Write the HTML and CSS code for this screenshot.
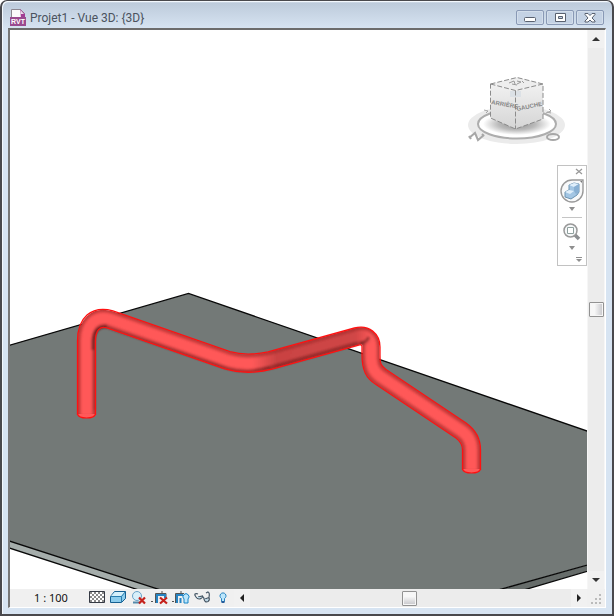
FILE: index.html
```html
<!DOCTYPE html>
<html lang="fr">
<head>
<meta charset="utf-8">
<meta name="viewport" content="width=device-width, initial-scale=1">
<title>Projet1 - Vue 3D: {3D}</title>
<link rel="stylesheet" href="styles.css">
</head>
<body>
<main class="window">
  <header class="titlebar">
    <svg class="doc-icon" viewBox="0 0 16 17" aria-hidden="true">
      <path d="M1.500 .5h9l4 4v11.500h-13z" fill="#fbfafc" stroke="#8d8891"/>
      <path d="M10 0l5 5v4h-4z" fill="#a23d94"/>
      <path d="M10.500 1v4H14z" fill="#eadcea"/>
      <path d="M0 8h16v9H0z" fill="#9a4a90"/>
      <text class="doc-type" x="8" y="15" text-anchor="middle">RVT</text>
    </svg>
    <h1 class="title">Projet1 - Vue 3D: {3D}</h1>
    <div class="window-buttons">
      <button class="window-button" aria-label="Réduire"><svg viewBox="0 0 26 14" aria-hidden="true"><rect x="7.500" y="6.500" width="11" height="4" rx="1" fill="#fff" stroke="#59616f"/></svg></button>
      <button class="window-button" aria-label="Agrandir"><svg viewBox="0 0 26 14" aria-hidden="true"><path d="M8.500 2.500h10v8h-10zM11.500 5.500v2h4v-2z" fill="#fff" fill-rule="evenodd" stroke="#59616f"/></svg></button>
      <button class="window-button" aria-label="Fermer"><svg viewBox="0 0 26 14" aria-hidden="true"><path d="M8 2.500h3l2 2 2-2h3v1L15 7l3 3v1h-3l-2-2-2 2H8v-1l3-3-3-3.500z" fill="#fff" stroke="#59616f"/></svg></button>
    </div>
  </header>

  <section class="client">
    <div class="viewport">
      <svg class="scene" viewBox="10 30 577 559" preserveAspectRatio="xMidYMid slice" role="img" aria-label="Canalisation rouge sur une dalle">
        <defs>
          <linearGradient id="fade" gradientUnits="userSpaceOnUse" x1="252" y1="0" x2="373" y2="0">
            <stop offset="0" stop-color="#571515" stop-opacity="0"/>
            <stop offset=".2" stop-color="#571515" stop-opacity=".32"/>
            <stop offset=".85" stop-color="#571515" stop-opacity=".28"/>
            <stop offset="1" stop-color="#571515" stop-opacity="0"/>
          </linearGradient>
          <filter id="soft" filterUnits="userSpaceOnUse" x="10" y="280" width="577" height="220"><feGaussianBlur stdDeviation="1"/></filter>
          <path id="run" d="M86.500 415V341C86.500 324 96 315 110 319.300L227 360.200Q247 366.500 270 360.500L357 336.500C366 334 371 339 371 347V355C371 367 374 372 381 377L461 430.500C468 435 471.500 441 471.500 450V470"/>
        </defs>
        <path d="M0 348L188.500 293.500 600 435.500V561.500L490 592H167L0 538z" fill="#737977"/>
        <path d="M0 538L170 593H148L0 545z" fill="#a5adab"/>
        <path d="M491 592L600 561.500V567.500L517 592z" fill="#666c6a"/>
        <path d="M0 348L188.500 293.500 600 435.500M0 538L170 593M0 545L148 593M491 592L600 561.500M517 592L600 567.500" fill="none" stroke="#080808" stroke-width="1.300"/>
        <g fill="none">
          <use href="#run" stroke="#c03a3a" stroke-width="17"/>
          <g filter="url(#soft)">
            <use href="#run" stroke="#e84b4b" stroke-width="13"/>
            <use href="#run" stroke="#ff5959" stroke-width="10"/>
            <path d="M94 410V340Q95 327 106 327L228 368.500Q247 374 270 367" stroke="#7a2525" stroke-width="2" opacity=".6"/>
            <path d="M93 350V340Q94 326 107 326" stroke="#4b1515" stroke-width="3" opacity=".6"/>
            <path d="M250 363.500L270 360.500 357 336.500Q366 333 371 343" stroke="url(#fade)" stroke-width="16"/>
            <path d="M250 371Q261 370 270 367.500L358 343" stroke="url(#fade)" stroke-width="4"/>
            <path d="M360 343Q366 343 369 337" stroke="#4b1515" stroke-width="3" opacity=".5"/>
          </g>
          <path d="M77.500 415V341C77.500 318 91 305 113 310.800L230 351.700Q247 356.500 268 351.800L354.500 328C369 324 380 334 380 347V355C380 364 381 366 386 369.500L466 423C476 430 480.500 439 480.500 450V470M95.500 415V341C95.500 330 100 326 107 327.800L224 368.700Q247 375.500 272 369.200L359.500 345Q362 344 362 347V355C362 370 366 378 376 384.500L456 438C460 441 462.500 445 462.500 450V470" stroke="#ff1111" stroke-width="1.300"/>
        </g>
        <path d="M77.500 414q1 4 9 4t9-4M462.500 469q1 4 9 4t9-4" fill="#ff5959" stroke="#ff1111" stroke-width="1.200"/>
      </svg>

      <svg class="view-cube" viewBox="466 72 102 76" role="img" aria-label="Cube de vue">
        <defs>
          <radialGradient id="shadow"><stop offset="0" stop-color="#8d8d8d"/><stop offset=".55" stop-color="#bbb"/><stop offset="1" stop-color="#fff"/></radialGradient>
          <linearGradient id="side" x1="0" y1="0" x2="0" y2="1"><stop offset="0" stop-color="#f1f1f1"/><stop offset="1" stop-color="#d5d5d5"/></linearGradient>
        </defs>
        <ellipse cx="516.500" cy="125" rx="48.500" ry="19" fill="#ebebeb"/>
        <ellipse cx="517" cy="124" rx="39" ry="14.500" fill="#fff" stroke="#adadad" stroke-width="2"/>
        <ellipse cx="517" cy="124" rx="34" ry="11" fill="url(#shadow)"/>
        <path d="M490.500 84L515.500 90.500V129L490.500 118z" fill="url(#side)"/>
        <path d="M515.500 90.500L543 84V119L515.500 129z" fill="url(#side)"/>
        <path d="M490.500 84L517 77.500 543 84 515.500 90.500z" fill="#eee"/>
        <path d="M510 91h11v6h-11z" fill="#dce1e6"/>
        <path d="M490.500 84L517 77.500 543 84V119L515.500 129 490.500 118zL515.500 90.500 543 84M515.500 90.500V129" fill="none" stroke="#8c8c8c" stroke-dasharray="5 2"/>
        <path d="M509 83l5-2 1 3m2-3l4 1-4 2m5-3l2 2m-12 1l5 1" fill="none" stroke="#999"/>
        <text class="cube-label" transform="translate(491 104) rotate(10)">ARRIÈRE</text>
        <text class="cube-label" transform="translate(517 111) rotate(-12)">GAUCHE</text>
        <g fill="none" stroke="#a7a7a7" stroke-width="2">
          <path d="M469 138l6-5 3 7 6-5M469 136l2 3M482 134l2 2"/>
          <ellipse cx="553" cy="137" rx="6" ry="3"/>
          <path d="M484 110l4 1-2 2m60 0l5-2-2-2m-2 3l4 1" stroke-width="1"/>
        </g>
      </svg>

      <nav class="nav-bar" aria-label="Navigation">
        <button class="nav-close" aria-label="Fermer la barre"><svg viewBox="0 0 8 8" aria-hidden="true"><path d="M1 1l6 5M7 1L1 6" stroke="#999" stroke-width="1.300"/></svg></button>
        <button class="nav-tool" aria-label="Disque de navigation"><svg viewBox="0 0 26 26" aria-hidden="true">
          <path d="M13 2H24V13A11 11 0 1 1 13 2z" fill="#f8f9fa" stroke="#999" stroke-width="1.400"/>
          <path d="M10 7l5-2 5 1v8l-2 3-6 4-6-2v-5l4-2z" fill="#a3c6e4" stroke="#6d94b2"/>
          <path d="M10 7l5-2 5 1-5 3zM6 14l4-2 5 1-4 3z" fill="#e0effb"/>
          <path d="M15 9l5-3v8l-3 2-2-3z" fill="#89b0d3"/>
          <path d="M21 3h2v2z" fill="#777"/>
        </svg></button>
        <button class="nav-drop" aria-label="Options du disque"><svg viewBox="0 0 6 4" aria-hidden="true"><path d="M0 0h6L3 4z" fill="#8f8f8f"/></svg></button>
        <hr class="nav-line">
        <button class="nav-tool nav-zoom" aria-label="Zoom"><svg viewBox="0 0 20 20" aria-hidden="true">
          <path d="M13 13l4 4" stroke="#8b8e91" stroke-width="3.500"/><circle cx="8.500" cy="8.500" r="6.500" fill="#f5f7f8" stroke="#999" stroke-width="1.500"/><path d="M5.500 5.500h6v6h-6z" fill="#fff" stroke="#8fa09e"/>
        </svg></button>
        <button class="nav-drop" aria-label="Options du zoom"><svg viewBox="0 0 6 4" aria-hidden="true"><path d="M0 0h6L3 4z" fill="#8f8f8f"/></svg></button>
        <button class="nav-more" aria-label="Personnaliser"><svg viewBox="0 0 6 5" aria-hidden="true"><path d="M0 .5h6" stroke="#8f8f8f"/><path d="M0 2h6L3 5z" fill="#8f8f8f"/></svg></button>
      </nav>
    </div>

    <div class="scroll scroll-vertical">
      <button class="arrow" aria-label="Défiler vers le haut"><svg viewBox="0 0 8 8" aria-hidden="true"><path d="M0 6L4 2l4 4z" fill="#333"/></svg></button>
      <div class="track"><div class="thumb"></div></div>
      <button class="arrow" aria-label="Défiler vers le bas"><svg viewBox="0 0 8 8" aria-hidden="true"><path d="M0 2h8L4 6z" fill="#333"/></svg></button>
    </div>

    <footer class="status">
      <button class="scale">1 : 100</button>
      <div class="tools">
        <button class="tool" aria-label="Niveau de détail"><svg viewBox="0 0 18 16" aria-hidden="true">
          <defs><pattern id="check" width="4" height="4" patternUnits="userSpaceOnUse"><path d="M0 0h2v2H0zM2 2h2v2H2z" fill="#8a8a8a"/></pattern></defs>
          <path d="M1.500 1.500h15v11h-15z" fill="#fff"/><path d="M1.500 1.500h15v11h-15z" fill="url(#check)" stroke="#343943"/></svg></button>
        <button class="tool" aria-label="Style visuel"><svg viewBox="0 0 18 16" aria-hidden="true"><path d="M1.500 6.500l4-5h11v7l-4 4h-11z" fill="#8cccec" stroke="#155f91" stroke-linejoin="round"/><path d="M2 6l4-4h10l-4 4z" fill="#d5f0fb"/><path d="M2 6.500h10.500v5.500M12.500 6.500l4-5" fill="none" stroke="#287dae"/></svg></button>
        <button class="tool" aria-label="Ombres"><svg viewBox="0 0 18 16" aria-hidden="true"><circle cx="7" cy="6" r="4.500" fill="#d8effa" stroke="#6aa2c7"/><path d="M3 12.500h7" stroke="#558bac" stroke-width="2"/><path d="M9 7.500l6 6M15 7.500l-6 6" stroke="#c5221c" stroke-width="2.200"/></svg></button>
        <button class="tool" aria-label="Cadrer la vue"><svg viewBox="0 0 18 16" aria-hidden="true"><path d="M0 11.500h2M4 11.500h2M4.500 13V3.500H15V8M11 1v2" stroke="#555" fill="none"/><path d="M6 13V5h8v3" stroke="#2783c1" fill="none" stroke-width="2"/><path d="M9 7.500l7 6M16 7.500l-7 6" stroke="#c5221c" stroke-width="2.200"/></svg></button>
        <button class="tool" aria-label="Zone cadrée"><svg viewBox="0 0 18 16" aria-hidden="true"><path d="M0 11.500h2M4 11.500h2M3.500 13V3.500H12M9 1v2" stroke="#555" fill="none"/><path d="M5 13V5h6M8.500 8v5" stroke="#2783c1" fill="none" stroke-width="2"/><path d="M12 9a3 3 0 1 1 4 0v4h-4z" fill="#bce6fb" stroke="#1684c6"/></svg></button>
        <button class="tool" aria-label="Masquer temporairement"><svg viewBox="0 0 18 16" aria-hidden="true"><path d="M1.500 4.500L3 7q2 3 5 1.500 2-1 1.500-2.500L5 7M9.500 7q1-1 1.500 2 1 4 4 2.500 2-1.500 1-4L12 9M16 7q1-4-1-5l-2 1M1.500 4.500Q3 3 5 4" fill="none" stroke="#455766" stroke-width="1.200"/><path d="M4 7h4v1H4zM12 9h3v2h-2z" fill="#bad7e6"/></svg></button>
        <button class="tool" aria-label="Révéler les éléments"><svg viewBox="0 0 18 16" aria-hidden="true"><path d="M7.500 8.500a3 3 0 1 1 3 0v3h-3z" fill="#bce6fb" stroke="#2783c1"/><path d="M7.500 12h3" stroke="#275d9b" stroke-width="2"/></svg></button>
      </div>
      <div class="scroll scroll-horizontal">
        <button class="arrow" aria-label="Défiler à gauche"><svg viewBox="0 0 8 8" aria-hidden="true"><path d="M6 0v8L2 4z" fill="#222"/></svg></button>
        <div class="track"><div class="thumb"></div></div>
        <button class="arrow" aria-label="Défiler à droite"><svg viewBox="0 0 8 8" aria-hidden="true"><path d="M2 0v8l4-4z" fill="#222"/></svg></button>
      </div>
    </footer>
    <div class="grip"><svg viewBox="0 0 18 18" aria-hidden="true"><path d="M12 5h2v2h-2zM8 9h2v2H8zM12 9h2v2h-2zM4 13h2v2H4zM8 13h2v2H8zM12 13h2v2h-2z" fill="#bbb"/></svg></div>
  </section>
</main>
</body>
</html>
```
FILE: styles.css
```css
* {
  box-sizing: border-box;
}

body {
  margin: 0;
  background: #fff;
  font-family: "Noto Sans", "Open Sans", sans-serif;
}

button {
  display: grid;
  place-items: center;
  padding: 0;
  border: 0;
  background: transparent;
  color: inherit;
  font: inherit;
}

svg {
  display: block;
}

.window {
  display: flex;
  flex-direction: column;
  height: 100vh;
  padding: 0 6px 6px;
  border: 2px solid #49494d;
  border-top-width: 1px;
  border-radius: 7px 7px 0 0;
  background: linear-gradient(#f0f6fc 0, #bdcbdb 2px, #d7e4f2 28px);
  box-shadow: inset 1px 1px #f3f8fd;
}

.titlebar {
  display: flex;
  align-items: center;
  gap: 4px;
  height: 27px;
  flex: none;
  padding: 6px 2px 0 2px;
}

.doc-icon {
  width: 16px;
  height: 17px;
}

.doc-type {
  fill: #fff;
  font-family: "Liberation Sans", sans-serif;
  font-size: 7px;
  font-weight: 700;
}

.title {
  flex: 1;
  margin: 0;
  color: #4b535e;
  font-family: Roboto, "Open Sans", sans-serif;
  font-size: 12px;
  font-weight: 400;
  line-height: 16px;
  white-space: nowrap;
}

.window-buttons {
  display: flex;
  gap: 2px;
}

.window-button {
  width: 28px;
  height: 15px;
  border: 1px solid #8999b5;
  border-radius: 2px;
  background: #c4d2e4;
  box-shadow: inset 0 0 0 1px #d3deeb;
}

.window-button svg {
  width: 26px;
  height: 14px;
}

.client {
  display: grid;
  flex: 1;
  grid-template: minmax(0, 1fr) 18px / minmax(0, 1fr) 18px;
  min-height: 0;
  border: 1px solid #fff;
  border-top: 2px solid #6c6c6c;
  border-left: 2px solid #777;
}

.viewport {
  position: relative;
  overflow: hidden;
  background: #fff;
}

.scene {
  width: 100%;
  height: 100%;
}

.view-cube {
  position: absolute;
  top: 42px;
  right: 19px;
  width: 102px;
  height: 76px;
}

.cube-label {
  fill: #858585;
  font-family: "Liberation Sans", sans-serif;
  font-size: 6px;
  font-weight: 700;
}

.nav-bar {
  position: absolute;
  top: 135px;
  right: 0;
  display: flex;
  flex-direction: column;
  align-items: center;
  width: 30px;
  height: 101px;
  border: 1px solid #c2c2c2;
  background: #fff;
}

.nav-close,
.nav-more {
  align-self: flex-end;
  width: 14px;
  height: 12px;
}

.nav-close svg {
  width: 8px;
  height: 8px;
}

.nav-tool svg {
  width: 26px;
  height: 26px;
}

.nav-drop {
  width: 26px;
  height: 12px;
}

.nav-drop svg {
  width: 6px;
  height: 4px;
}

.nav-line {
  width: 20px;
  margin: 2px 0 4px;
  border: 0;
  border-top: 1px solid #c5c5c5;
}

.nav-zoom svg {
  width: 20px;
  height: 20px;
}

.nav-more svg {
  width: 6px;
  height: 5px;
}

.scroll {
  display: flex;
  background: #ececec;
}

.scroll-vertical {
  flex-direction: column;
  border-left: 1px solid #f6f6f6;
  border-right: 1px solid #f6f6f6;
}

.arrow {
  flex: none;
  width: 16px;
  height: 18px;
  background: #f1f1f1;
}

.arrow svg {
  width: 8px;
  height: 8px;
}

.track {
  display: flex;
  flex: 1;
  align-items: center;
  justify-content: center;
}

.thumb {
  width: 15px;
  height: 15px;
  border: 1px solid #929292;
  border-radius: 1px;
  background: linear-gradient(90deg, #f7f7f7 35%, #c6c6ca);
  box-shadow: inset 0 0 0 1px #f6f6f6;
}

.scroll-horizontal .thumb {
  background: linear-gradient(#f7f7f7 35%, #c6c6ca);
}

.scroll-horizontal {
  flex: 1;
}

.scroll-horizontal .track {
  justify-content: flex-start;
  padding-left: 43%;
}

.status {
  display: flex;
  min-width: 0;
  background: #f0f0f0;
}

.scale {
  width: 78px;
  padding-left: 4px;
  color: #111;
  font-size: 11px;
  line-height: 16px;
}

.tools {
  display: flex;
  gap: 3px;
  padding-right: 2px;
}

.tool {
  width: 18px;
  height: 18px;
}

.tool svg {
  width: 18px;
  height: 16px;
}

.grip {
  background: #f0f0f0;
}

.grip svg {
  width: 18px;
  height: 18px;
}
```
